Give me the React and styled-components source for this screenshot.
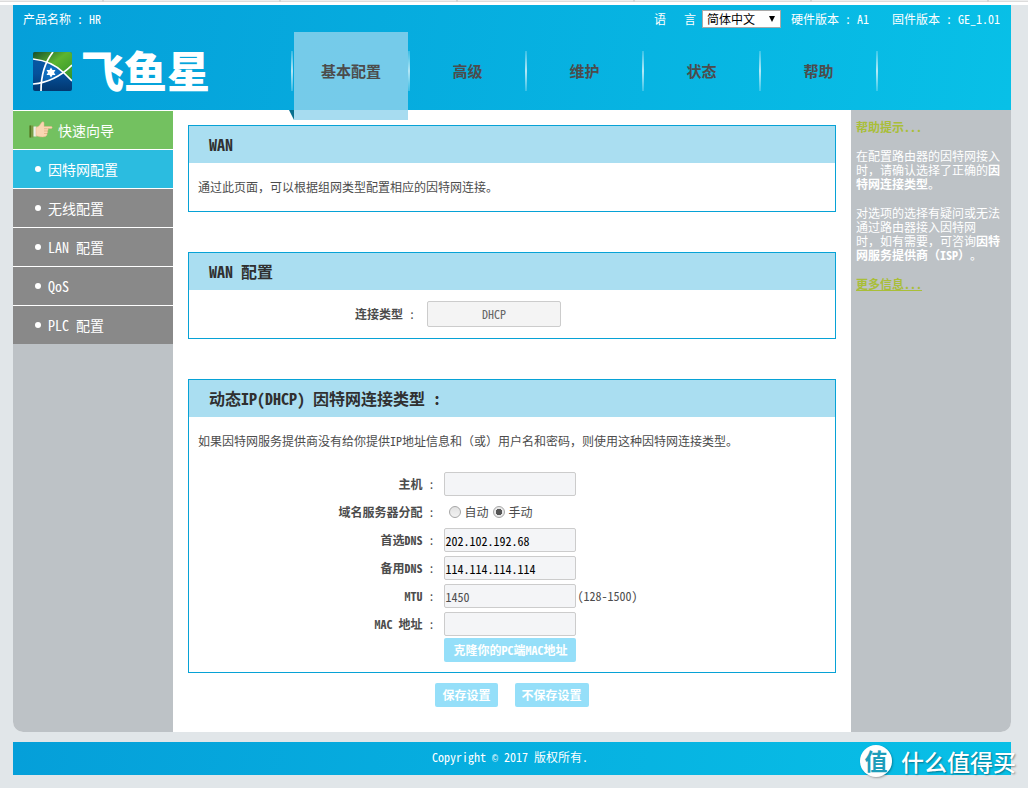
import { useState } from "react";
import styled, { createGlobalStyle } from "styled-components";

const navItems = ["基本配置", "高级", "维护", "状态", "帮助"];
const menuItems = ["因特网配置", "无线配置", "LAN 配置", "QoS", "PLC 配置"];

const LogoMark = () => (
  <svg width="39" height="39" viewBox="0 0 39 39" aria-hidden="true">
    <defs>
      <linearGradient id="blue" x1="0" y1="0" x2="0" y2="1">
        <stop offset="0" stopColor="#0a5ba8" />
        <stop offset="0.55" stopColor="#05519b" />
        <stop offset="1" stopColor="#02376f" />
      </linearGradient>
      <linearGradient id="green" x1="0" y1="0" x2="1" y2="1">
        <stop offset="0" stopColor="#174f2c" />
        <stop offset="0.45" stopColor="#5cb531" />
        <stop offset="1" stopColor="#2f8f2a" />
      </linearGradient>
      <radialGradient id="glow" cx="0.4" cy="0.5" r="0.6">
        <stop offset="0" stopColor="#1379cc" />
        <stop offset="1" stopColor="#0a59a6" />
      </radialGradient>
      <clipPath id="mark">
        <rect width="39" height="39" rx="2" />
      </clipPath>
    </defs>
    <g clipPath="url(#mark)">
      <rect width="39" height="39" fill="url(#blue)" />
      <path d="M0 0H39V29L31 21Q19 9 0 7Z" fill="url(#green)" />
      <path d="M13 10Q24 14 31 21Q22 28 8 31Q8 19 13 10Z" fill="url(#glow)" />
      <g fill="none" stroke="#fff" strokeWidth="1.7">
        <path d="M0 7Q19 9 31 21L39 29" />
        <path d="M0 32Q22 30 39 13" />
        <path d="M20 0Q8 15 8 39" />
      </g>
      <path
        d="M18 15.500L19.500 18L22.500 18L21 20.500L22.500 23L19.500 23L18 25.500L16.500 23L13.500 23L15 20.500L13.500 18L16.500 18Z"
        fill="#fff"
      />
    </g>
  </svg>
);

const Hand = () => (
  <svg width="24" height="18" viewBox="0 0 24 18" aria-hidden="true">
    <rect x="0.500" y="4.500" width="4" height="12" rx="0.500" fill="#7a9a45" />
    <rect x="0.500" y="4.500" width="1.500" height="12" fill="#4b7a20" />
    <rect x="4.500" y="5.500" width="3" height="10" fill="#eef1e8" />
    <path
      d="M7 6.500L10 5L13 1Q14.500 0 15 1.800L15 5.500H22.500Q24 6.200 22.500 7.500H19Q19.500 9 18.500 10Q19.200 11.500 18 12.500Q18.500 14.300 17 15.200Q15 16.300 11 15.800L7 14.800Z"
      fill="#f9d6b2"
      stroke="#e6b487"
      strokeWidth="0.500"
    />
    <path d="M15 7.700H18.500M15 10H18.500M15 12.500H18" stroke="#dba273" strokeWidth="0.600" />
  </svg>
);

const App = () => {
  const [dnsMode, setDnsMode] = useState("manual");

  return (
    <>
      <GlobalStyle />
      <TopStrip />
      <Page>
        <Header>
          <TopBar>
            <span>产品名称 : HR</span>
            <TopRight>
              <LanguageLabel htmlFor="language">
                <span>语</span>
                <span>言</span>
              </LanguageLabel>
              <LanguageWrap>
                <LanguageSelect id="language">
                  <option>简体中文</option>
                </LanguageSelect>
              </LanguageWrap>
              <HardwareVersion>硬件版本 : A1</HardwareVersion>
              <span>固件版本 : GE_1.01</span>
            </TopRight>
          </TopBar>
          <Masthead>
            <Logo href="#">
              <LogoMark />
              <LogoText>飞鱼星</LogoText>
            </Logo>
            <Nav>
              {navItems.map((item, i) => (
                <NavItem key={item}>
                  <NavLink href="#" $active={i === 0}>
                    {item}
                  </NavLink>
                </NavItem>
              ))}
            </Nav>
          </Masthead>
        </Header>

        <Body>
          <Sidebar>
            <Wizard href="#">
              <Hand />
              快速向导
            </Wizard>
            {menuItems.map((item, i) => (
              <MenuLink key={item} href="#" $active={i === 0}>
                {item}
              </MenuLink>
            ))}
          </Sidebar>

          <Main>
            <Panel>
              <PanelTitle>WAN</PanelTitle>
              <PanelText>通过此页面，可以根据组网类型配置相应的因特网连接。</PanelText>
            </Panel>

            <Panel>
              <PanelTitle>WAN 配置</PanelTitle>
              <TypeRow>
                <TypeLabel htmlFor="type">
                  连接类型<Colon> :</Colon>
                </TypeLabel>
                <TypeSelect id="type">
                  <option>DHCP</option>
                </TypeSelect>
              </TypeRow>
            </Panel>

            <Panel>
              <PanelTitle>动态IP(DHCP) 因特网连接类型 :</PanelTitle>
              <PanelText>
                如果因特网服务提供商没有给你提供IP地址信息和（或）用户名和密码，则使用这种因特网连接类型。
              </PanelText>
              <Form>
                <Row>
                  <Label htmlFor="host">
                    主机<Colon> :</Colon>
                  </Label>
                  <TextInput id="host" />
                </Row>
                <Row>
                  <Label as="span" id="dns-mode">
                    域名服务器分配<Colon> :</Colon>
                  </Label>
                  <RadioGroup role="radiogroup" aria-labelledby="dns-mode">
                    <RadioLabel>
                      <Radio
                        name="dns"
                        checked={dnsMode === "auto"}
                        onChange={() => setDnsMode("auto")}
                      />
                      自动
                    </RadioLabel>
                    <RadioLabel>
                      <Radio
                        name="dns"
                        checked={dnsMode === "manual"}
                        onChange={() => setDnsMode("manual")}
                      />
                      手动
                    </RadioLabel>
                  </RadioGroup>
                </Row>
                <Row>
                  <Label htmlFor="dns1">
                    首选DNS<Colon> :</Colon>
                  </Label>
                  <TextInput id="dns1" $dark defaultValue="202.102.192.68" />
                </Row>
                <Row>
                  <Label htmlFor="dns2">
                    备用DNS<Colon> :</Colon>
                  </Label>
                  <TextInput id="dns2" $dark defaultValue="114.114.114.114" />
                </Row>
                <Row>
                  <Label htmlFor="mtu">
                    MTU<Colon> :</Colon>
                  </Label>
                  <TextInput id="mtu" defaultValue="1450" />
                  <Hint>(128-1500)</Hint>
                </Row>
                <Row>
                  <Label htmlFor="mac">
                    MAC 地址<Colon> :</Colon>
                  </Label>
                  <TextInput id="mac" />
                </Row>
                <CloneRow>
                  <Label as="span" />
                  <CloneButton type="button">克隆你的PC端MAC地址</CloneButton>
                </CloneRow>
              </Form>
            </Panel>

            <Actions>
              <Button type="button">保存设置</Button>
              <Button type="button">不保存设置</Button>
            </Actions>
          </Main>

          <Help>
            <HelpTitle>帮助提示...</HelpTitle>
            <p>
              在配置路由器的因特网接入时，请确认选择了正确的<b>因特网连接类型</b>。
            </p>
            <p>
              对选项的选择有疑问或无法通过路由器接入因特网
              <br />
              时，如有需要，可咨询<b>因特网服务提供商（ISP）</b>。
            </p>
            <MoreLink href="#">更多信息...</MoreLink>
          </Help>
        </Body>

        <Footer>
          <span>
            Copyright <CopySign>©</CopySign> 2017 版权所有.
          </span>
          <Watermark>
            <Badge>值</Badge>
            什么值得买
          </Watermark>
        </Footer>
      </Page>
    </>
  );
};

const GlobalStyle = createGlobalStyle`
  * {
    box-sizing: border-box;
  }

  body {
    margin: 0;
    background: #e1e6e9;
    color: #4c4c4c;
    font-family: "Noto Sans Mono CJK SC", "Liberation Mono", "Noto Sans CJK SC", monospace;
    font-size: 12px;
    line-height: 14px;
    text-spacing-trim: space-all;
  }

  input,
  select,
  button {
    font: inherit;
  }

  a {
    color: inherit;
    text-decoration: none;
  }
`;

const TopStrip = styled.div`
  height: 5px;
  background:
    repeating-linear-gradient(90deg, transparent 0 102px, #d4d4d4 102px 104px, transparent 104px 177px)
      0 0 / 100% 2px no-repeat,
    linear-gradient(#eeeeee 1px, #dcdcdc 1px 2px, #ffffff 2px);
`;

const Page = styled.div`
  margin: 0 17px 0 13px;
`;

const Header = styled.header`
  background: linear-gradient(100deg, #059fd9, #08c0e7);
  color: #fff;
`;

const TopBar = styled.div`
  display: flex;
  justify-content: space-between;
  align-items: center;
  height: 27px;
  padding: 0 11px 0 10px;
`;

const TopRight = styled.div`
  display: flex;
  align-items: center;
`;

const LanguageLabel = styled.label`
  display: flex;
  gap: 18px;
  margin-right: 6px;
`;

const LanguageWrap = styled.span`
  display: flex;
  align-items: center;
  position: relative;

  &::after {
    content: "";
    position: absolute;
    right: 6px;
    border: 3px solid transparent;
    border-top: 6px solid #000;
    border-bottom: 0;
    pointer-events: none;
  }
`;

const LanguageSelect = styled.select`
  appearance: none;
  width: 79px;
  height: 18px;
  padding: 0 4px;
  border: 1px solid #a9a9a9;
  border-radius: 0;
  background: #fff;
  color: #000;
`;

const HardwareVersion = styled.span`
  margin: 0 23px 0 10px;
`;

const Masthead = styled.div`
  display: flex;
  height: 78px;
`;

const Logo = styled.a`
  display: flex;
  align-items: center;
  gap: 9px;
  width: 278px;
  padding-left: 20px;
`;

const LogoText = styled.span`
  padding-bottom: 4px;
  font-family: "Noto Sans CJK SC", sans-serif;
  font-size: 43px;
  font-weight: 900;
  line-height: 40px;
`;

const divider = "linear-gradient(rgba(255, 255, 255, 0.2), rgba(255, 255, 255, 0.7), rgba(255, 255, 255, 0.2))";

const Nav = styled.nav`
  display: flex;
  padding-right: 2px;
  background: ${divider} right center / 2px 40px no-repeat;
`;

const NavItem = styled.div`
  width: 117px;
  padding-left: 2px;
  background: ${divider} left center / 2px 40px no-repeat;
`;

const NavLink = styled.a`
  display: flex;
  justify-content: center;
  align-items: center;
  position: relative;
  height: ${({ $active }) => ($active ? "88px" : "78px")};
  margin-left: ${({ $active }) => ($active ? "1px" : "0")};
  padding-bottom: ${({ $active }) => ($active ? "10px" : "0")};
  background: ${({ $active }) => ($active ? "rgba(145, 211, 236, 0.8)" : "none")};
  color: #4c4c4c;
  font-size: 15px;
  font-weight: bold;

  &::before {
    content: "";
    display: ${({ $active }) => ($active ? "block" : "none")};
    position: absolute;
    right: 100%;
    bottom: 0;
    width: 5px;
    height: 10px;
    background: #07708f;
    clip-path: polygon(0 0, 100% 0, 100% 100%);
  }
`;

const Body = styled.div`
  display: flex;
  overflow: hidden;
  border-radius: 0 0 10px 10px;
  background: #fff;
`;

const Sidebar = styled.nav`
  flex: 0 0 160px;
  background: #bdc2c6;
`;

const Wizard = styled.a`
  display: flex;
  align-items: center;
  gap: 5px;
  height: 39px;
  padding-left: 16px;
  border-top: 1px solid #fff;
  background: #73c160;
  color: #fff;
  font-size: 14px;
`;

const MenuLink = styled(Wizard)`
  gap: 7px;
  padding-left: 22px;
  background: ${({ $active }) => ($active ? "#2bbce0" : "#898989")};

  &::before {
    content: "";
    width: 6px;
    height: 6px;
    border-radius: 50%;
    background: #fff;
  }
`;

const Main = styled.main`
  flex: 1;
  min-width: 0;
  padding: 15px 15px 25px;
`;

const Panel = styled.section`
  border: 1px solid #07a2d6;

  & + & {
    margin-top: 40px;
  }
`;

const PanelTitle = styled.h2`
  margin: 0;
  padding-left: 20px;
  background: #aadef1;
  color: #303030;
  font-size: 16px;
  line-height: 37px;
`;

const PanelText = styled.p`
  margin: 0;
  padding: 17px 9px;
`;

const TypeRow = styled.div`
  display: flex;
  align-items: center;
  height: 48px;
`;

const TypeLabel = styled.label`
  width: 35%;
  margin-right: 12px;
  font-weight: bold;
  text-align: right;
`;

const TypeSelect = styled.select`
  appearance: none;
  width: 134px;
  height: 26px;
  padding: 0;
  border: 1px solid #ccc;
  border-radius: 2px;
  background: #f4f4f4;
  color: #666;
  text-align: center;
  text-align-last: center;
`;

const Colon = styled.span`
  font-weight: normal;
  white-space: pre;
`;

const Form = styled.form`
  padding: 5px 0 10px;
`;

const Row = styled.div`
  display: flex;
  align-items: center;
  height: 28px;
`;

const CloneRow = styled(Row)`
  height: 24px;
`;

const Label = styled.label`
  width: 38%;
  margin-right: 10px;
  font-weight: bold;
  text-align: right;
`;

const TextInput = styled.input`
  width: 132px;
  height: 24px;
  padding: 0;
  border: 1px solid #ccc;
  border-radius: 2px;
  background: #f4f5f7;
  color: ${({ $dark }) => ($dark ? "#000" : "#4c4c4c")};
`;

const RadioGroup = styled.div`
  display: flex;
  gap: 5px;
  padding-left: 5px;
`;

const RadioLabel = styled.label`
  display: flex;
  align-items: center;
  gap: 3px;
`;

const Radio = styled.input.attrs({ type: "radio" })`
  appearance: none;
  width: 12px;
  height: 12px;
  margin: 0;
  border: 1px solid #a6a6a6;
  border-radius: 50%;
  background: linear-gradient(#e2e2e2, #f2f2f2);

  &:checked {
    background: radial-gradient(circle, #555 0 3px, #e8e8e8 3px);
  }
`;

const Hint = styled.span`
  margin-left: 1px;
`;

const Button = styled.button`
  height: 24px;
  padding: 0 7px;
  border: 0;
  border-radius: 2px;
  background: #95dff9;
  color: #fff;
  font-weight: bold;
`;

const CloneButton = styled(Button)`
  width: 132px;
  padding: 0;
`;

const Actions = styled.div`
  display: flex;
  justify-content: center;
  gap: 17px;
  margin-top: 10px;
`;

const Help = styled.aside`
  flex: 0 0 160px;
  padding: 10px 8px 0 5px;
  background: #bdc2c6;
  color: #fff;

  p {
    margin: 15px 0;
  }
`;

const HelpTitle = styled.h3`
  margin: 0;
  color: #a9be38;
  font-size: 12px;
`;

const MoreLink = styled.a`
  color: #a9be38;
  font-weight: bold;
  text-decoration: underline;
`;

const Footer = styled.footer`
  display: flex;
  justify-content: center;
  align-items: center;
  position: relative;
  height: 33px;
  margin: 10px 0 13px;
  padding-right: 4px;
  background: linear-gradient(100deg, #059fd9, #08c0e7);
  color: #fff;
`;

const CopySign = styled.span`
  font-family: "Liberation Mono", monospace;
  font-size: 10px;
`;

const Watermark = styled.div`
  display: flex;
  align-items: center;
  gap: 9px;
  position: absolute;
  top: 3px;
  right: -5px;
  color: #fff;
  font-family: "Noto Sans CJK SC", sans-serif;
  font-size: 23px;
  font-weight: 500;
  line-height: 32px;
  text-shadow: 1px 1px 2px rgba(0, 0, 0, 0.4);
`;

const Badge = styled.span`
  width: 32px;
  height: 32px;
  border-radius: 50%;
  background: #fff;
  box-shadow: 1px 1px 2px rgba(0, 0, 0, 0.3);
  color: #1e9dba;
  font-weight: bold;
  line-height: 30px;
  text-align: center;
  text-shadow: none;
`;

export default App;
